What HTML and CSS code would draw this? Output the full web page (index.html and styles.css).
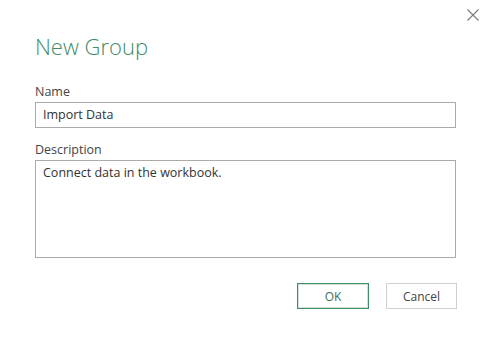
FILE: index.html
```html
<!DOCTYPE html>
<html>
<head>
<meta charset="utf-8">
<link rel="stylesheet" href="styles.css">
</head>
<body>
<div class="dialog">
  <button class="close" aria-label="Close">
    <svg width="12" height="12" viewBox="0 0 12 12"><path d="M0.5 0.5 L11.5 11.5 M11.5 0.5 L0.5 11.5" stroke="#7a7a7a" stroke-width="1.1" fill="none"/></svg>
  </button>
  <h1 class="title">New Group</h1>
  <label class="label">Name</label>
  <div class="input">Import Data</div>
  <label class="label label-desc">Description</label>
  <div class="textarea">Connect data in the workbook.</div>
  <div class="actions">
    <button class="btn btn-primary">OK</button>
    <button class="btn">Cancel</button>
  </div>
</div>
</body>
</html>
```
FILE: styles.css
```css
html, body {
  margin: 0;
  padding: 0;
  background: #ffffff;
}
.dialog {
  position: relative;
  width: 492px;
  height: 342px;
  box-sizing: border-box;
  padding: 30px 36px 0 35px;
  font-family: "Open Sans", "Noto Sans", sans-serif;
  color: #333;
  display: flex;
  flex-direction: column;
}
.close {
  position: absolute;
  top: 9px;
  left: 467px;
  width: 12px;
  height: 12px;
  padding: 0;
  border: 0;
  background: none;
  display: block;
}
.close svg { display: block; }
.title {
  margin: 0;
  font-size: 22px;
  font-weight: 300;
  color: #3f8c6b;
  line-height: 32px;
  height: 50px;
}
.label {
  font-size: 12.5px;
  color: #444;
  line-height: 16px;
  height: 22px;
  padding-top: 4px;
  box-sizing: border-box;
}
.label-desc { margin-top: 11px; height: 21px; padding-top: 3px; }
.input, .textarea {
  border: 1px solid #ababab;
  font-size: 12.5px;
  color: #333;
  padding: 3px 7px;
  line-height: 18px;
  box-sizing: border-box;
}
.input { height: 26px; }
.textarea { height: 98px; padding-top: 3px; }
.actions {
  display: flex;
  justify-content: flex-end;
  gap: 17px;
  margin-top: 25px;
  margin-right: -1px;
}
.btn {
  width: 71px;
  height: 26px;
  background: #fff;
  border: 1px solid #cfcfcf;
  font-family: "Open Sans", "Noto Sans", sans-serif;
  font-size: 12px;
  color: #444;
  padding: 0;
}
.btn-primary {
  width: 72px;
  border: 1px solid #3f8c6b;
  box-shadow: inset 0 0 0 1px #cfe3d8;
  color: #3a6f58;
}
```
